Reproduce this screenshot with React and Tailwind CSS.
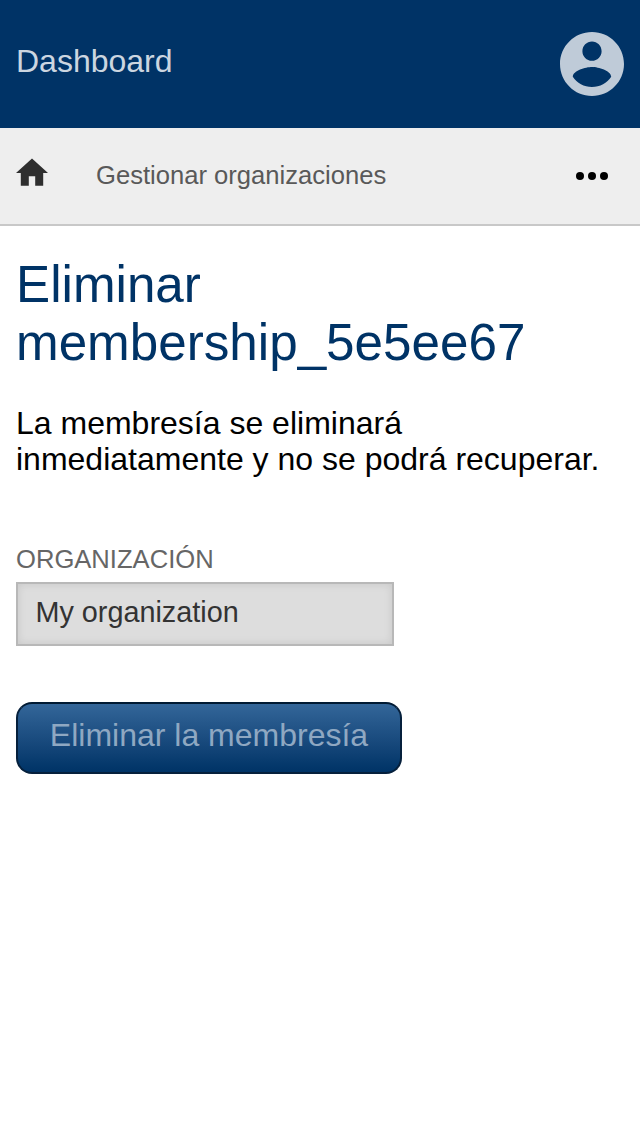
function AccountIcon() {
  return (
    <svg viewBox="2 2 20 20" className="size-16 fill-[#bfcbd8]" aria-hidden="true">
      <path d="M12 2C6.48 2 2 6.48 2 12s4.48 10 10 10 10-4.48 10-10S17.52 2 12 2zm0 3c1.66 0 3 1.34 3 3s-1.34 3-3 3-3-1.34-3-3 1.34-3 3-3zm0 14.2c-2.5 0-4.71-1.28-6-3.22.03-1.99 4-3.08 6-3.08 1.99 0 5.97 1.09 6 3.08-1.29 1.94-3.5 3.22-6 3.22z" />
    </svg>
  );
}

function HomeIcon() {
  return (
    <svg viewBox="2 2 20 20" className="block size-8 fill-[#2e2e2e]" aria-hidden="true">
      <path d="M10 20v-6h4v6h5v-8h3L12 3 2 12h3v8z" />
    </svg>
  );
}

function MoreIcon() {
  return (
    <svg viewBox="0 0 32 8" className="h-2 w-8 fill-black" aria-hidden="true">
      <circle cx="4" cy="4" r="4" />
      <circle cx="16" cy="4" r="4" />
      <circle cx="28" cy="4" r="4" />
    </svg>
  );
}

export default function App() {
  return (
    <div className="min-h-screen bg-white font-['Liberation_Sans',Arial,sans-serif] text-[32px] leading-[36px] text-black">
      <header className="flex h-32 items-center justify-between bg-[#003366] px-4">
        <a className="pb-1.5 text-[#ccd6e0]">Dashboard</a>
        <AccountIcon />
      </header>

      <nav className="flex h-[98px] items-center border-b-2 border-[#c8c8c8] bg-[#eeeeee] pr-8 pl-4">
        <span className="pb-1.5">
          <HomeIcon />
        </span>
        <a className="ml-12 grow pb-0.5 text-[25.6px] leading-[30px] text-[#595959]">Gestionar organizaciones</a>
        <MoreIcon />
      </nav>

      <main className="px-4 pt-[30px]">
        <h1 className="text-[51.2px] leading-[58px] text-[#003366]">
          Eliminar
          <br />
          membership_5e5ee67
        </h1>
        <p className="mt-[33px]">
          La membresía se eliminará
          <br />
          inmediatamente y no se podrá recuperar.
        </p>

        <form className="mt-[67px] flex flex-col items-start">
          <label className="text-[25.6px] leading-[30px] text-[#666666] uppercase">Organización</label>
          <div className="mt-2 flex h-16 w-[378px] items-center border-2 border-[#b8b8b8] bg-[#dddddd] pb-1 pl-[17.4px] text-[28.8px] leading-8 text-[#333333] shadow-[inset_0_0_8px_rgba(0,0,0,0.1)]">
            My organization
          </div>
          <button
            type="button"
            className="mt-14 flex h-[72px] w-[386px] items-center justify-center rounded-2xl border-2 border-[#06203c] border-t-[#001a33] bg-linear-to-b from-[#336699] to-[#003366] pb-1.5 text-[#8fa8c2]"
          >
            Eliminar la membresía
          </button>
        </form>
      </main>
    </div>
  );
}
